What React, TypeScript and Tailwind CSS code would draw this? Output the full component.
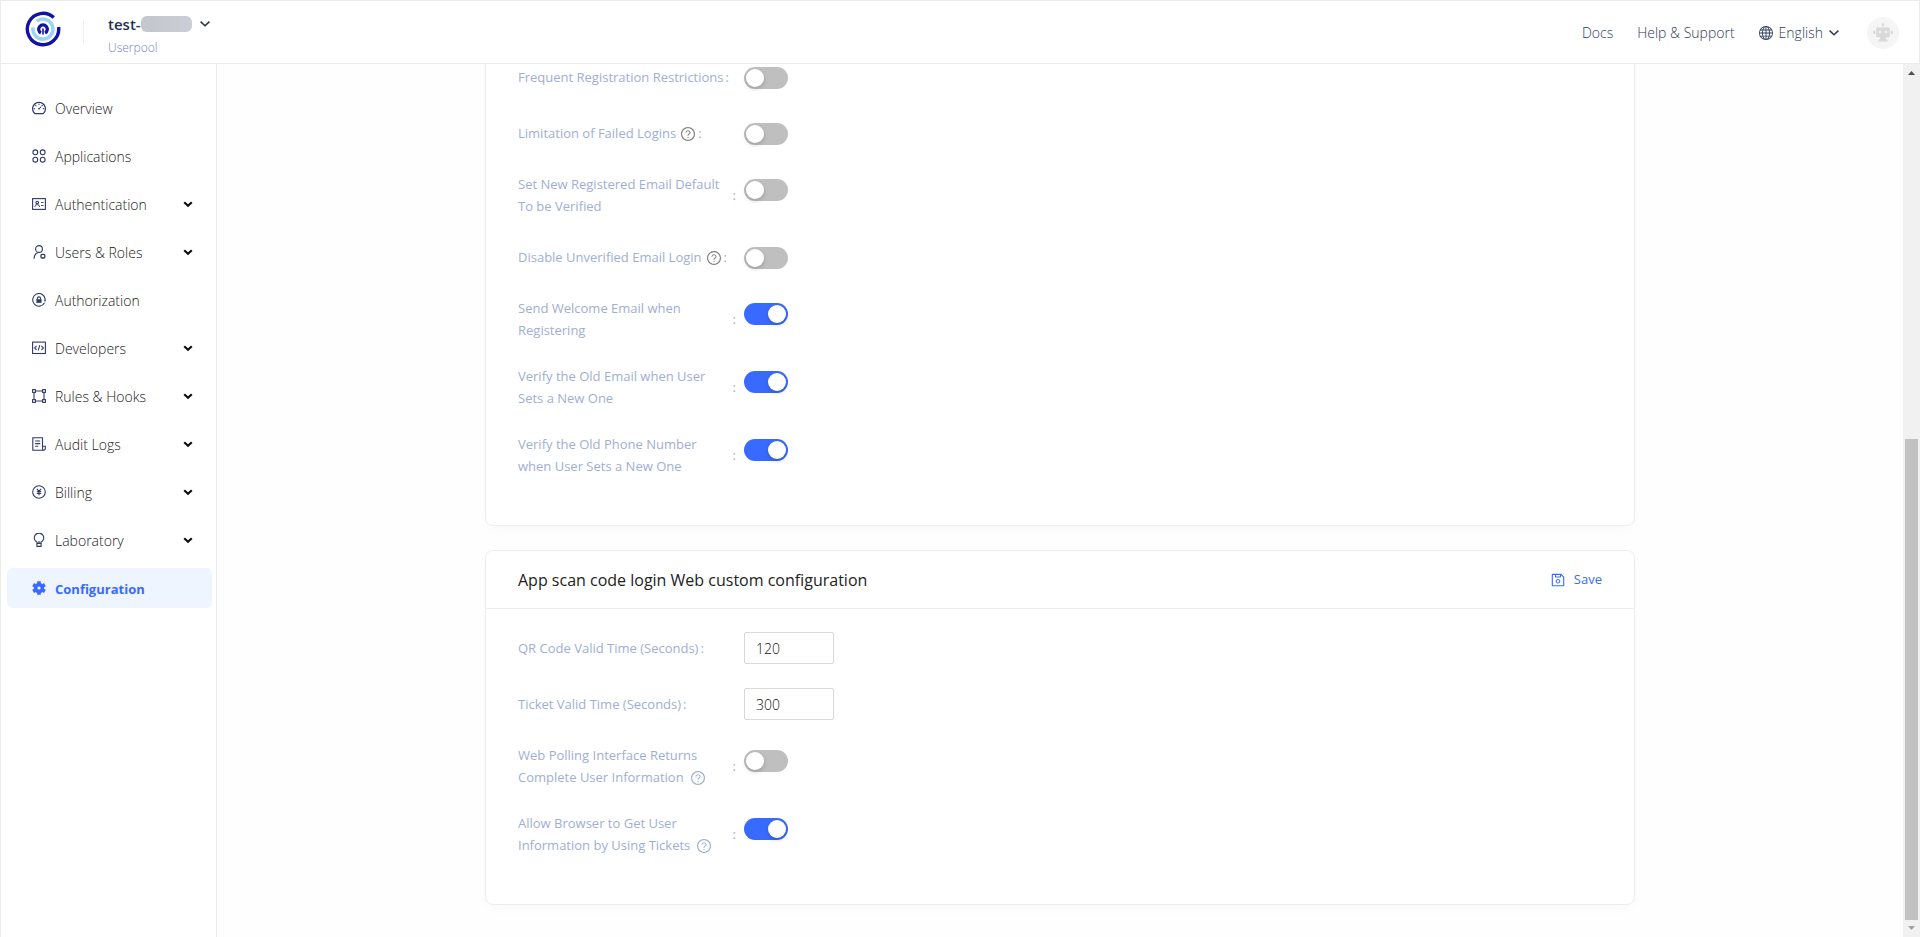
import { useState } from "react";
import type { ReactNode } from "react";
import { AiOutlineDashboard, AiOutlineQuestionCircle, AiOutlineSave } from "react-icons/ai";
import { BsGlobe } from "react-icons/bs";

type IconProps = { className?: string };

function Line({ children, className = "size-[14px]" }: { children: ReactNode; className?: string }) {
  return (
    <svg viewBox="0 0 14 14" fill="none" stroke="currentColor" strokeWidth="1.1" className={className} aria-hidden="true">
      {children}
    </svg>
  );
}

function Logo() {
  return (
    <svg viewBox="0 0 36 36" fill="none" className="mb-[6px] size-9" aria-hidden="true">
      <path d="M28.8 6.6A15.7 15.7 0 1 0 33.6 16" stroke="#1212a6" strokeWidth="3.4" />
      <path d="M8.1 16.4A10 10 0 1 0 11.8 10.2" stroke="#9bd5f3" strokeWidth="3.6" />
      <path d="M15.9 22A4.3 4.3 0 1 1 20.1 22" stroke="#1212a6" strokeWidth="3.3" />
      <path d="M18 17.5v6" stroke="#1212a6" strokeWidth="1.6" />
    </svg>
  );
}

const AppsIcon = () => (
  <Line>
    <circle cx="3.3" cy="3.3" r="2.4" />
    <circle cx="10.7" cy="3.3" r="2.4" />
    <circle cx="3.3" cy="10.7" r="2.4" />
    <circle cx="10.7" cy="10.7" r="2.4" />
  </Line>
);
const CardIcon = () => (
  <Line>
    <rect x="0.6" y="1.6" width="12.8" height="10.8" />
    <circle cx="5.2" cy="5.6" r="1.3" />
    <path d="M2.8 10a2.4 2.4 0 0 1 4.8 0M9 5.5h2.6M9 8.5h2.6" strokeWidth="0.9" />
  </Line>
);
const UserIcon = () => (
  <Line>
    <circle cx="7" cy="4" r="3.4" />
    <path d="M2 13.8c0-3 1.4-5.2 4-6.2" />
    <rect x="9" y="9.4" width="3.8" height="3.6" rx="1" strokeWidth="1.3" />
  </Line>
);
const LockIcon = () => (
  <Line>
    <path d="M12.6 9.8A6.3 6.3 0 1 1 13.3 6.4" />
    <path d="M12 6.8h2l-1 1.8z" fill="currentColor" strokeWidth="0.4" />
    <rect x="4.6" y="6.4" width="4.8" height="3.4" fill="currentColor" strokeWidth="0.3" />
    <path d="M5.4 6.4V5.5a1.6 1.6 0 0 1 3.2 0v.9" />
  </Line>
);
const CodeIcon = () => (
  <Line>
    <rect x="0.6" y="1.1" width="12.8" height="11.4" />
    <path d="M4.6 4.8 2.6 6.9l2 2M9.4 4.8l2 2.1-2 2M7.8 4.2l-1.6 5.2" />
  </Line>
);
const HooksIcon = () => (
  <Line>
    <path d="M3.4 2h7.2M3.4 12h7.2M2 3.4v7.2M12 3.4v7.2" />
    <rect x="0.6" y="0.6" width="2.8" height="2.8" />
    <rect x="10.6" y="0.6" width="2.8" height="2.8" />
    <rect x="0.6" y="10.6" width="2.8" height="2.8" />
    <rect x="10.6" y="10.6" width="2.8" height="2.8" />
  </Line>
);
const LogsIcon = () => (
  <Line>
    <path d="M10.5 9V.7h-9.7v12.6h10.7M3.2 4h5M3.2 6.6h5M3.2 9.2h3" />
    <path d="M10.5 9.2h2.8v2.5a1.4 1.4 0 0 1-2.8 0z" />
  </Line>
);
const BillingIcon = () => (
  <Line>
    <circle cx="7" cy="7" r="6.3" />
    <path d="M4.8 3.8 7 6.2l2.2-2.4M7 6.2v4M4.8 6.6h4.4M4.8 8.5h4.4" />
  </Line>
);
const BulbIcon = () => (
  <Line>
    <path d="M4.9 10.4V9A4.7 4.7 0 1 1 9.1 9v1.4z" />
    <path d="M4.9 11v2.4h4.2V11M7 10.2V8" />
  </Line>
);
const GearIcon = () => (
  <Line>
    <circle cx="7" cy="7" r="3.4" strokeWidth="3.6" />
    <path d="M7 .2v3M7 10.800v3M1.100 3.600l2.600 1.500M10.300 8.900l2.600 1.500M1.100 10.400l2.600-1.500M10.300 5.100l2.600-1.500" strokeWidth="3.600" />
  </Line>
);
const RobotIcon = () => (
  <svg viewBox="0 0 20 20" fill="#d9d9d9" className="size-5" aria-hidden="true">
    <circle cx="10" cy="1.6" r="1.3" />
    <path d="M9.6 2h.8v3h-.8zM4.2 4.4h11.6a1 1 0 0 1 1 1v7.8a1 1 0 0 1-1 1H4.2a1 1 0 0 1-1-1V5.4a1 1 0 0 1 1-1zM2.2 7.4h-1a1.2 1.2 0 0 0-1 1.2v1.4a1.2 1.2 0 0 0 1 1.2h1zM17.8 7.4h1a1.2 1.2 0 0 1 1 1.2v1.4a1.2 1.2 0 0 1-1 1.2h-1zM7.2 14h5.6v2.2h1a.8.8 0 0 1 .8.8v1.5H5.4V17a.8.8 0 0 1 .8-.8h1z" />
    <circle cx="7" cy="9" r="1.3" fill="#f5f5f5" />
    <circle cx="13" cy="9" r="1.3" fill="#f5f5f5" />
  </svg>
);
const Chevron = ({ className }: IconProps) => (
  <svg viewBox="0 0 10 6" fill="none" stroke="currentColor" strokeWidth="1.5" className={className} aria-hidden="true">
    <path d="m.6.6 4.4 4.2L9.4.6" />
  </svg>
);

const NAV: { label: string; icon: ReactNode; expandable?: boolean; active?: boolean }[] = [
  { label: "Overview", icon: <AiOutlineDashboard className="size-4" /> },
  { label: "Applications", icon: <AppsIcon /> },
  { label: "Authentication", icon: <CardIcon />, expandable: true },
  { label: "Users & Roles", icon: <UserIcon />, expandable: true },
  { label: "Authorization", icon: <LockIcon /> },
  { label: "Developers", icon: <CodeIcon />, expandable: true },
  { label: "Rules & Hooks", icon: <HooksIcon />, expandable: true },
  { label: "Audit Logs", icon: <LogsIcon />, expandable: true },
  { label: "Billing", icon: <BillingIcon />, expandable: true },
  { label: "Laboratory", icon: <BulbIcon />, expandable: true },
  { label: "Configuration", icon: <GearIcon />, active: true },
];

function Row({ id, lines, help, children }: { id: string; lines: string[]; help?: "gray" | "blue"; children: ReactNode }) {
  const double = lines.length > 1;
  return (
    <div className="flex items-start">
      <label htmlFor={id} className={`flex w-[226px] shrink-0 items-center pr-2 text-[13px] text-[#a1aed4] ${double ? "leading-[22px]" : "leading-8"}`}>
        <span className={double ? "flex-1" : ""}>
          {lines.map((line, i) => (
            <span key={line} className={double ? "block whitespace-nowrap" : "whitespace-nowrap"}>
              {line}
              {help && i === lines.length - 1 && (
                <AiOutlineQuestionCircle
                  className={help === "gray" ? "-mt-[2px] ml-1 inline size-4 text-[#808080]" : "-mt-[2px] ml-[6px] inline size-4"}
                />
              )}
            </span>
          ))}
        </span>
        <span className="ml-[2px]">:</span>
      </label>
      {children}
    </div>
  );
}

function Toggle({ id, initial = false }: { id: string; initial?: boolean }) {
  const [on, setOn] = useState(initial);
  return (
    <button
      id={id}
      type="button"
      role="switch"
      aria-checked={on}
      onClick={() => setOn(!on)}
      className={`mt-[6px] flex h-[22px] w-11 items-center rounded-full px-[2px] ${on ? "justify-end bg-[#396aff]" : "justify-start bg-[#bfbfbf]"}`}
    >
      <span className="size-[18px] rounded-full bg-white shadow-[0_2px_4px_rgba(0,35,11,0.2)]" />
    </button>
  );
}

function NumberBox({ id, value }: { id: string; value: string }) {
  return (
    <input
      id={id}
      type="text"
      inputMode="numeric"
      defaultValue={value}
      className="h-8 w-[90px] rounded-xs border border-[#d9d9d9] bg-white px-[11px] text-sm font-light text-[#111]"
    />
  );
}

const CARD = "mx-auto w-full max-w-[1150px] shrink-0 rounded-lg border border-[#eee] bg-white shadow-[0_4px_12px_rgba(0,60,40,0.02)]";

export default function App() {
  return (
    <div className="flex h-screen flex-col overflow-hidden border-t border-l border-[#ececec] bg-[#fefefe] font-['Open_Sans','Noto_Sans',sans-serif] text-[#333]">
      <header className="flex h-[63px] shrink-0 items-center border-r border-b border-[#ececec] bg-white pr-5 pl-6">
        <Logo />
        <div className="ml-[22px] h-6 w-px bg-[#eee]" />
        <div className="ml-6 pt-2">
          <button type="button" className="flex items-center text-[15px] leading-6 font-semibold text-[#24304f]">
            test-
            <span className="h-4 w-[51px] rounded-md bg-linear-to-r from-[#c2c7cc] to-[#cbced6]" />
            <Chevron className="ml-2 h-[6px] w-[10px]" />
          </button>
          <div className="text-xs leading-6 font-light text-[#7384c0]">Userpool</div>
        </div>
        <nav className="ml-auto flex items-center pt-[2px] text-sm font-light text-[#2f3a5c]">
          <a href="#docs">Docs</a>
          <a href="#help" className="ml-6">Help &amp; Support</a>
          <button type="button" className="ml-6 flex items-center">
            <BsGlobe className="mr-[6px] size-[14px]" />
            English
            <Chevron className="ml-[6px] h-[6px] w-[10px]" />
          </button>
          <button type="button" aria-label="Account" className="ml-7 flex size-8 items-center justify-center rounded-full bg-[#f5f5f5]">
            <RobotIcon />
          </button>
        </nav>
      </header>
      <div className="flex min-h-0 flex-1">
        <aside className="w-[216px] shrink-0 border-r border-[#e8e9ee] bg-white pt-6 pr-1 pl-[6px]">
          <ul className="flex flex-col gap-2">
            {NAV.map((item) => (
              <li key={item.label}>
                <a
                  href="#nav"
                  className={`flex h-10 items-center rounded-md pr-[19px] pl-6 text-sm ${
                    item.active ? "bg-[#eef5ff] font-bold text-[#396aff]" : "font-light text-[#222]"
                  }`}
                >
                  <span className={`flex w-4 justify-center ${item.active ? "" : "text-[#2f3a66]"}`}>{item.icon}</span>
                  <span className={`ml-2 flex-1 pt-[2px] ${item.active ? "text-[13px]" : ""}`}>{item.label}</span>
                  {item.expandable && (
                    <svg viewBox="0 0 10 7" fill="none" stroke="#111" strokeWidth="2.2" className="h-[7px] w-[10px]" aria-hidden="true">
                      <path d="m1.2 1.2 3.8 3.6 3.8-3.6" />
                    </svg>
                  )}
                </a>
              </li>
            ))}
          </ul>
        </aside>
        <main className="flex min-w-0 flex-1 flex-col justify-end gap-6 overflow-hidden px-6 pb-8">
          <section className={CARD}>
            <div className="flex flex-col gap-6 px-8 pt-6 pb-12">
              <Row id="freq" lines={["Frequent Registration Restrictions"]}><Toggle id="freq" /></Row>
              <Row id="failed" lines={["Limitation of Failed Logins"]} help="gray"><Toggle id="failed" /></Row>
              <Row id="default" lines={["Set New Registered Email Default", "To be Verified"]}><Toggle id="default" /></Row>
              <Row id="unverified" lines={["Disable Unverified Email Login"]} help="gray"><Toggle id="unverified" /></Row>
              <Row id="welcome" lines={["Send Welcome Email when", "Registering"]}><Toggle id="welcome" initial /></Row>
              <Row id="oldmail" lines={["Verify the Old Email when User", "Sets a New One"]}><Toggle id="oldmail" initial /></Row>
              <Row id="oldphone" lines={["Verify the Old Phone Number", "when User Sets a New One"]}><Toggle id="oldphone" initial /></Row>
            </div>
          </section>
          <section className={CARD}>
            <div className="flex h-[58px] items-center justify-between border-b border-[#eee] px-8">
              <h2 className="text-base text-[#222]">App scan code login Web custom configuration</h2>
              <button type="button" className="flex items-center gap-2 text-[13px] text-[#396aff]">
                <AiOutlineSave className="size-4" />
                Save
              </button>
            </div>
            <div className="flex flex-col gap-6 px-8 pt-[23px] pb-12">
              <Row id="qr" lines={["QR Code Valid Time (Seconds)"]}><NumberBox id="qr" value="120" /></Row>
              <Row id="ticket" lines={["Ticket Valid Time (Seconds)"]}><NumberBox id="ticket" value="300" /></Row>
              <Row id="poll" lines={["Web Polling Interface Returns", "Complete User Information"]} help="blue"><Toggle id="poll" /></Row>
              <Row id="browser" lines={["Allow Browser to Get User", "Information by Using Tickets"]} help="blue"><Toggle id="browser" initial /></Row>
            </div>
          </section>
        </main>
        <div className="flex w-[17px] shrink-0 flex-col items-center bg-[#f1f1f1]" aria-hidden="true">
          <svg viewBox="0 0 17 17" className="size-[17px] shrink-0" fill="#505050"><path d="M5 11h7L8.5 7z" /></svg>
          <div className="flex w-[13px] flex-1 flex-col">
            <div className="flex-[358]" />
            <div className="flex-[481] bg-[#c1c1c1]" />
          </div>
          <svg viewBox="0 0 17 17" className="size-[17px] shrink-0" fill="#a3a3a3"><path d="M5 6h7l-3.5 4z" /></svg>
        </div>
      </div>
    </div>
  );
}
